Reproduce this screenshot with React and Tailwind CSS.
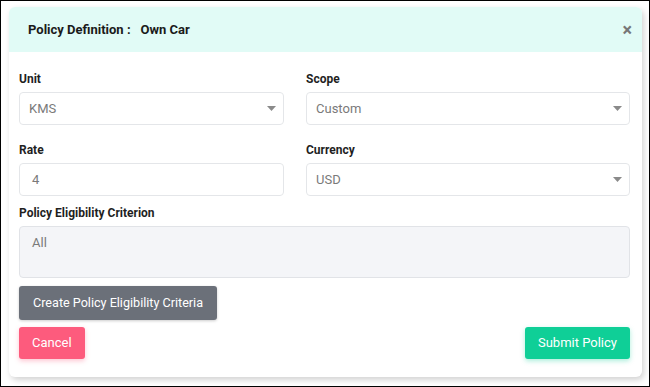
import React from 'react';

function Caret() {
  return (
    <svg width="9" height="5" viewBox="0 0 9 5" className="shrink-0">
      <path d="M0 0 L9 0 L4.5 5 Z" fill="#8a8a8a" />
    </svg>
  );
}

function SelectBox({ value }) {
  return (
    <div className="flex h-[33px] items-center justify-between rounded-[4px] border border-[#e4e6e9] bg-white pl-[9px] pr-[7px] text-[13px] text-[#7a7a7a]">
      <span>{value}</span>
      <Caret />
    </div>
  );
}

export default function App() {
  const labelClass = "block h-[16px] text-[12px] font-bold leading-[16px] text-[#1f1f1f]";

  return (
    <div
      className="h-[387px] w-[650px] border border-black bg-white pl-[8px] pt-[6px]"
      style={{ fontFamily: 'Roboto, "Liberation Sans", sans-serif' }}
    >
      <div className="w-[633px] overflow-hidden rounded-[6px] bg-white shadow-[2px_3px_6px_rgba(0,0,0,0.18)]">
        {/* En-tête */}
        <div className="flex h-[45px] items-center justify-between bg-[#e1fbf6] pl-[19px] pr-[10px]">
          <h1 className="text-[13px] font-bold text-[#1a1a1a]">
            Policy Definition :<span className="ml-[10px]">Own Car</span>
          </h1>
          <button className="text-[18px] font-bold leading-none text-[#777]">×</button>
        </div>

        <div className="pb-[18px] pl-[10px] pr-[12px] pt-[19px]">
          <div className="grid grid-cols-[265px_324px] gap-x-[22px]">
            <div>
              <label className={labelClass}>Unit</label>
              <div className="mt-[5px]"><SelectBox value="KMS" /></div>
            </div>
            <div>
              <label className={labelClass}>Scope</label>
              <div className="mt-[5px]"><SelectBox value="Custom" /></div>
            </div>
            <div className="mt-[17px]">
              <label className={labelClass}>Rate</label>
              <div className="mt-[5px] flex h-[33px] items-center rounded-[4px] border border-[#e4e6e9] pl-[12px] text-[13px] text-[#7a7a7a]">
                4
              </div>
            </div>
            <div className="mt-[17px]">
              <label className={labelClass}>Currency</label>
              <div className="mt-[5px]"><SelectBox value="USD" /></div>
            </div>
          </div>

          <div className="mt-[9px]">
            <label className={labelClass}>Policy Eligibility Criterion</label>
            <div className="mt-[5px] h-[52px] rounded-[4px] border border-[#e1e3e7] bg-[#f4f5f8] pl-[12px] pt-[6px] text-[13px] text-[#7a7a7a]">
              All
            </div>
          </div>

          <button className="mt-[8px] h-[34px] rounded-[3px] bg-[#6b7079] px-[14px] text-[12.6px] font-normal text-white shadow-[0_1px_3px_rgba(0,0,0,0.2)]">
            Create Policy Eligibility Criteria
          </button>

          <div className="mt-[7px] flex items-center justify-between">
            <button className="h-[32px] rounded-[3px] bg-[#fd5b7d] px-[13px] text-[13px] text-white shadow-[0_2px_5px_rgba(253,91,125,0.35)]">
              Cancel
            </button>
            <button className="h-[32px] rounded-[3px] bg-[#0fcf97] px-[13px] text-[13px] text-white shadow-[0_2px_5px_rgba(15,207,151,0.35)]">
              Submit Policy
            </button>
          </div>
        </div>
      </div>
    </div>
  );
}
